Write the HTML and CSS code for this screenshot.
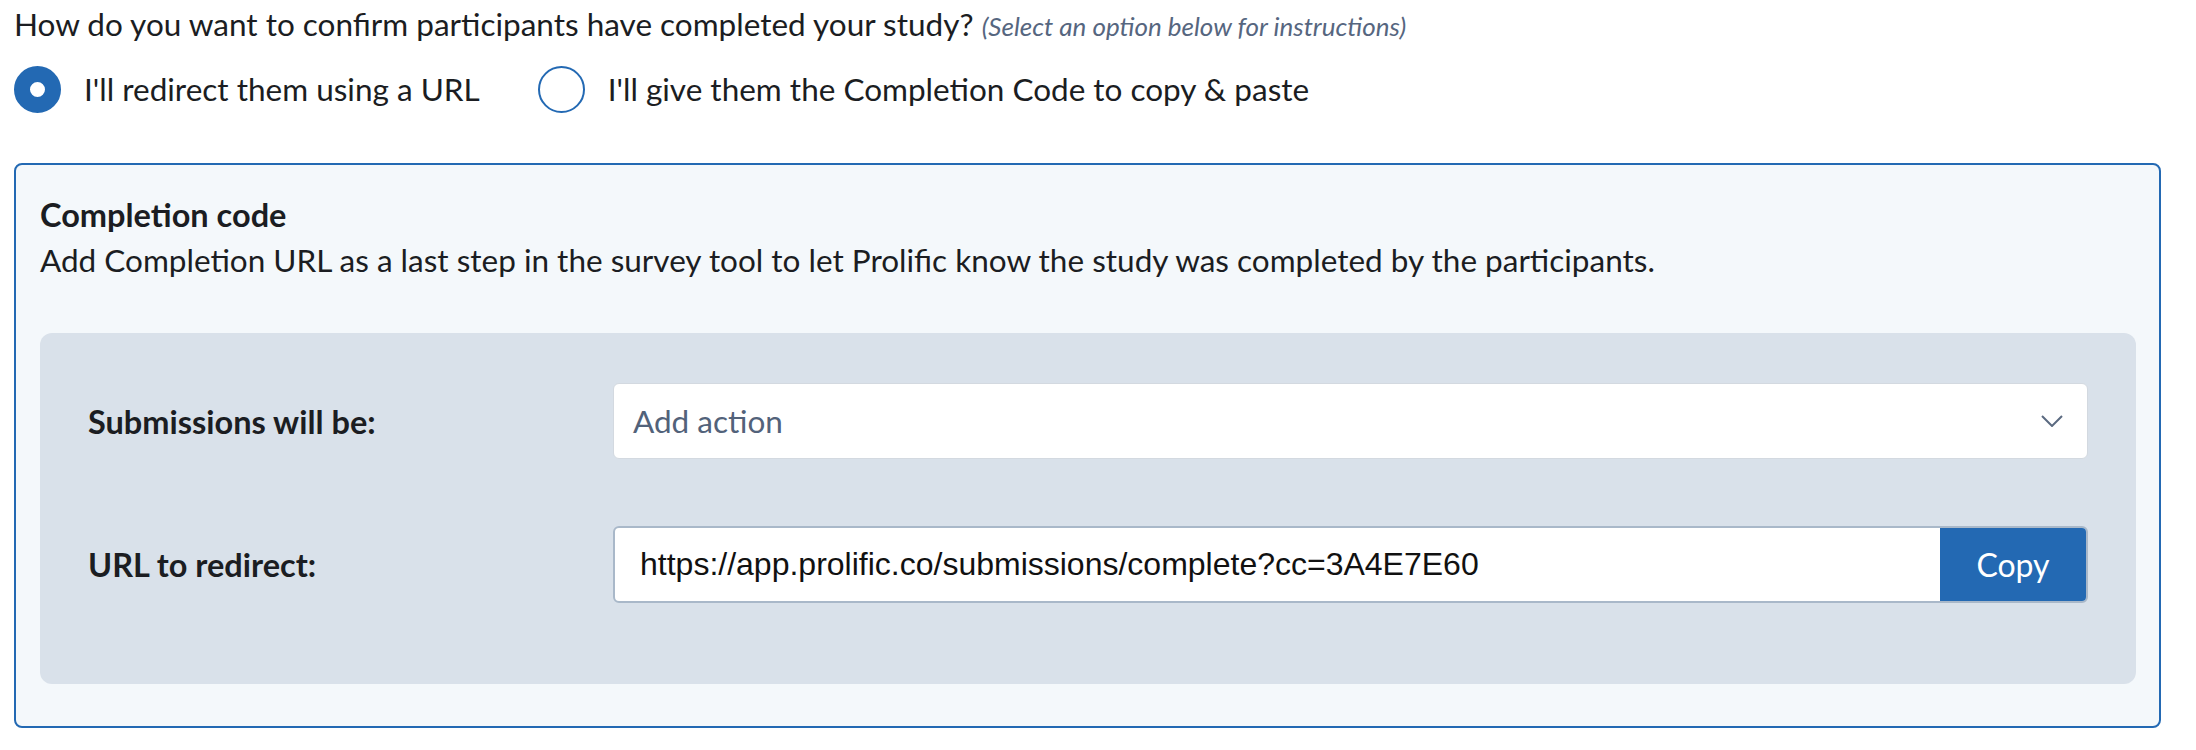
FILE: index.html
```html
<!DOCTYPE html>
<html lang="en">
<head>
<meta charset="utf-8">
<title>Completion</title>
<link rel="stylesheet" href="styles.css">
</head>
<body>
<div class="page">
  <p class="question">How do you want to confirm participants have completed your study? <em class="hint">(Select an option below for instructions)</em></p>
  <div class="radios">
    <label class="radio"><span class="dot dot-checked"></span><span class="radio-text">I'll redirect them using a URL</span></label>
    <label class="radio"><span class="dot"></span><span class="radio-text">I'll give them the Completion Code to copy &amp; paste</span></label>
  </div>
  <section class="box">
    <h3 class="box-title">Completion code</h3>
    <p class="box-desc">Add Completion URL as a last step in the survey tool to let Prolific know the study was completed by the participants.</p>
    <div class="panel">
      <div class="row">
        <div class="label">Submissions will be:</div>
        <div class="select">
          <span class="placeholder">Add action</span>
          <svg class="chevron" width="22" height="12" viewBox="0 0 22 12"><path d="M1 1 L11 11 L21 1" fill="none" stroke="#5b6a80" stroke-width="2"/></svg>
        </div>
      </div>
      <div class="row">
        <div class="label">URL to redirect:</div>
        <div class="copy-field">
          <div class="url">https://app.prolific.co/submissions/complete?cc=3A4E7E60</div>
          <button class="copy-btn">Copy</button>
        </div>
      </div>
    </div>
  </section>
</div>
</body>
</html>
```
FILE: styles.css
```css
* { box-sizing: border-box; }
body {
  margin: 0;
  background: #ffffff;
  font-family: Lato, "Noto Sans", sans-serif;
  color: #1b1d22;
}
.page {
  width: 2161px;
  padding: 4px 0 0 14px;
}
.question {
  margin: 0;
  font-size: 31.5px;
  line-height: 40px;
  color: #1b1d22;
}
.hint {
  font-size: 26px;
  color: #56667f;
}
.radios {
  display: flex;
  align-items: center;
  margin-top: 19px;
  height: 48px;
}
.radio {
  display: flex;
  align-items: center;
  font-size: 31.5px;
  color: #1b1d22;
  margin-right: 58px;
}
.dot {
  width: 47px;
  height: 47px;
  border-radius: 50%;
  border: 2px solid #2369b3;
  background: #fff;
  margin-right: 23px;
  flex: none;
}
.dot-checked {
  border: 16px solid #2369b3;
}
.box {
  margin-top: 50px;
  border: 2px solid #2369b3;
  border-radius: 8px;
  background: #f4f8fb;
  padding: 28px 23px 42px 24px;
}
.box-title {
  margin: 0;
  font-size: 32.5px;
  font-weight: 700;
  line-height: 44px;
}
.box-desc {
  margin: 0;
  font-size: 31.5px;
  line-height: 46px;
}
.panel {
  margin-top: 50px;
  background: #d9e1ea;
  border-radius: 12px;
  padding: 50px 48px 81px 48px;
  display: grid;
  grid-template-columns: 525px 1fr;
  row-gap: 67px;
}
.row {
  display: contents;
}
.label {
  display: flex;
  align-items: center;
  font-size: 32.5px;
  font-weight: 700;
  color: #1b1d22;
}
.select {
  height: 76px;
  background: #fff;
  border: 1px solid #d3d9e0;
  border-radius: 6px;
  display: flex;
  align-items: center;
  justify-content: space-between;
  padding: 0 24px 0 19px;
}
.placeholder {
  font-size: 31.5px;
  color: #52627a;
}
.chevron { display: block; }
.copy-field {
  display: flex;
  height: 77px;
  border: 2px solid #a9b8c9;
  border-radius: 6px;
  overflow: hidden;
  background: #fff;
}
.url {
  flex: 1;
  display: flex;
  align-items: center;
  padding-left: 25px;
  font-family: "Liberation Sans", Arial, sans-serif;
  font-size: 32px;
  color: #111;
}
.copy-btn {
  width: 146px;
  border: none;
  background: #2369b3;
  color: #fff;
  font-family: Lato, "Noto Sans", sans-serif;
  font-size: 32px;
  padding: 0;
}
```
